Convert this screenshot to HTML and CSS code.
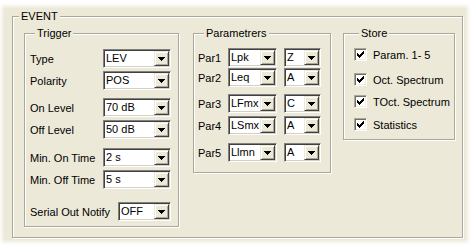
FILE: index.html
```html
<!DOCTYPE html>
<html>
<head>
<meta charset="utf-8">
<link rel="stylesheet" href="styles.css">
</head>
<body>
<div class="dialog">
  <div class="gb event">
    <div class="gb-title t-event">EVENT</div>
    <div class="cols">
      <div class="gb trigger">
        <div class="gb-title t-trigger">Trigger</div>
        <div class="trow r-type"><span class="lbl">Type</span><div class="combo w68"><span class="val">LEV</span><span class="btn"><svg width="7" height="4" viewBox="0 0 7 4"><path d="M0 0h7v1H0zM1 1h5v1H1zM2 2h3v1H2zM3 3h1v1H3z"/></svg></span></div></div>
        <div class="trow r-pol"><span class="lbl">Polarity</span><div class="combo w68"><span class="val">POS</span><span class="btn"><svg width="7" height="4" viewBox="0 0 7 4"><path d="M0 0h7v1H0zM1 1h5v1H1zM2 2h3v1H2zM3 3h1v1H3z"/></svg></span></div></div>
        <div class="trow r-on"><span class="lbl">On Level</span><div class="combo w68"><span class="val">70 dB</span><span class="btn"><svg width="7" height="4" viewBox="0 0 7 4"><path d="M0 0h7v1H0zM1 1h5v1H1zM2 2h3v1H2zM3 3h1v1H3z"/></svg></span></div></div>
        <div class="trow r-off"><span class="lbl">Off Level</span><div class="combo w68"><span class="val">50 dB</span><span class="btn"><svg width="7" height="4" viewBox="0 0 7 4"><path d="M0 0h7v1H0zM1 1h5v1H1zM2 2h3v1H2zM3 3h1v1H3z"/></svg></span></div></div>
        <div class="trow r-minon"><span class="lbl">Min. On Time</span><div class="combo w68"><span class="val">2 s</span><span class="btn"><svg width="7" height="4" viewBox="0 0 7 4"><path d="M0 0h7v1H0zM1 1h5v1H1zM2 2h3v1H2zM3 3h1v1H3z"/></svg></span></div></div>
        <div class="trow r-minoff"><span class="lbl">Min. Off Time</span><div class="combo w68"><span class="val">5 s</span><span class="btn"><svg width="7" height="4" viewBox="0 0 7 4"><path d="M0 0h7v1H0zM1 1h5v1H1zM2 2h3v1H2zM3 3h1v1H3z"/></svg></span></div></div>
        <div class="trow r-serial"><span class="lbl">Serial Out Notify</span><div class="combo w53"><span class="val">OFF</span><span class="btn"><svg width="7" height="4" viewBox="0 0 7 4"><path d="M0 0h7v1H0zM1 1h5v1H1zM2 2h3v1H2zM3 3h1v1H3z"/></svg></span></div></div>
      </div>

      <div class="gb params">
        <div class="gb-title t-params">Parametrers</div>
        <div class="prow p1"><span class="plbl">Par1</span><div class="combo w49"><span class="val">Lpk</span><span class="btn"><svg width="7" height="4" viewBox="0 0 7 4"><path d="M0 0h7v1H0zM1 1h5v1H1zM2 2h3v1H2zM3 3h1v1H3z"/></svg></span></div><div class="combo w37"><span class="val">Z</span><span class="btn"><svg width="7" height="4" viewBox="0 0 7 4"><path d="M0 0h7v1H0zM1 1h5v1H1zM2 2h3v1H2zM3 3h1v1H3z"/></svg></span></div></div>
        <div class="prow p2"><span class="plbl">Par2</span><div class="combo w49"><span class="val">Leq</span><span class="btn"><svg width="7" height="4" viewBox="0 0 7 4"><path d="M0 0h7v1H0zM1 1h5v1H1zM2 2h3v1H2zM3 3h1v1H3z"/></svg></span></div><div class="combo w37"><span class="val">A</span><span class="btn"><svg width="7" height="4" viewBox="0 0 7 4"><path d="M0 0h7v1H0zM1 1h5v1H1zM2 2h3v1H2zM3 3h1v1H3z"/></svg></span></div></div>
        <div class="prow p3"><span class="plbl">Par3</span><div class="combo w49"><span class="val">LFmx</span><span class="btn"><svg width="7" height="4" viewBox="0 0 7 4"><path d="M0 0h7v1H0zM1 1h5v1H1zM2 2h3v1H2zM3 3h1v1H3z"/></svg></span></div><div class="combo w37"><span class="val">C</span><span class="btn"><svg width="7" height="4" viewBox="0 0 7 4"><path d="M0 0h7v1H0zM1 1h5v1H1zM2 2h3v1H2zM3 3h1v1H3z"/></svg></span></div></div>
        <div class="prow p4"><span class="plbl">Par4</span><div class="combo w49"><span class="val">LSmx</span><span class="btn"><svg width="7" height="4" viewBox="0 0 7 4"><path d="M0 0h7v1H0zM1 1h5v1H1zM2 2h3v1H2zM3 3h1v1H3z"/></svg></span></div><div class="combo w37"><span class="val">A</span><span class="btn"><svg width="7" height="4" viewBox="0 0 7 4"><path d="M0 0h7v1H0zM1 1h5v1H1zM2 2h3v1H2zM3 3h1v1H3z"/></svg></span></div></div>
        <div class="prow p5"><span class="plbl">Par5</span><div class="combo w49"><span class="val">Llmn</span><span class="btn"><svg width="7" height="4" viewBox="0 0 7 4"><path d="M0 0h7v1H0zM1 1h5v1H1zM2 2h3v1H2zM3 3h1v1H3z"/></svg></span></div><div class="combo w37"><span class="val">A</span><span class="btn"><svg width="7" height="4" viewBox="0 0 7 4"><path d="M0 0h7v1H0zM1 1h5v1H1zM2 2h3v1H2zM3 3h1v1H3z"/></svg></span></div></div>
      </div>

      <div class="gb store">
        <div class="gb-title t-store">Store</div>
        <div class="crow c1"><span class="cb"><svg width="7" height="7" viewBox="0 0 7 7"><path d="M6 0h1v1H6zM5 1h2v1H5zM0 2h1v1H0zM4 2h3v1H4zM0 3h2v1H0zM3 3h3v1H3zM0 4h5v1H0zM1 5h3v1H1zM2 6h1v1H2z"/></svg></span><span class="clbl">Param. 1- 5</span></div>
        <div class="crow c2"><span class="cb"><svg width="7" height="7" viewBox="0 0 7 7"><path d="M6 0h1v1H6zM5 1h2v1H5zM0 2h1v1H0zM4 2h3v1H4zM0 3h2v1H0zM3 3h3v1H3zM0 4h5v1H0zM1 5h3v1H1zM2 6h1v1H2z"/></svg></span><span class="clbl">Oct. Spectrum</span></div>
        <div class="crow c3"><span class="cb"><svg width="7" height="7" viewBox="0 0 7 7"><path d="M6 0h1v1H6zM5 1h2v1H5zM0 2h1v1H0zM4 2h3v1H4zM0 3h2v1H0zM3 3h3v1H3zM0 4h5v1H0zM1 5h3v1H1zM2 6h1v1H2z"/></svg></span><span class="clbl">TOct. Spectrum</span></div>
        <div class="crow c4"><span class="cb"><svg width="7" height="7" viewBox="0 0 7 7"><path d="M6 0h1v1H6zM5 1h2v1H5zM0 2h1v1H0zM4 2h3v1H4zM0 3h2v1H0zM3 3h3v1H3zM0 4h5v1H0zM1 5h3v1H1zM2 6h1v1H2z"/></svg></span><span class="clbl">Statistics</span></div>
      </div>
    </div>
  </div>
</div>
</body>
</html>
```

FILE: styles.css
```css
* { box-sizing: border-box; }
html, body { margin: 0; padding: 0; background: #fff; }
body {
  font-family: "Liberation Sans", Arial, sans-serif;
  font-size: 11px;
  color: #000;
  width: 476px;
  height: 249px;
  overflow: hidden;
}
.dialog {
  margin: 8px 0 0 4px;
  width: 462px;
  height: 232px;
  background: #ECE9D8;
  box-shadow: 0 0 4px 2px #ECE9D8;
  padding: 8px 0 0 8px;
}
.gb {
  border: 1px solid #ACA899;
  box-shadow: inset 1px 1px 0 #fff, 1px 1px 0 #fff;
}
.gb-title {
  height: 13px;
  line-height: 13px;
  margin-top: -7px;
  padding: 0 2px;
  background: #ECE9D8;
  width: max-content;
  white-space: nowrap;
}
.event { width: 451px; height: 222px; }
.t-event { margin-left: 6px; }
.cols {
  display: flex;
  align-items: flex-start;
  margin-top: 10px;
  padding-left: 11px;
}
.trigger { width: 155px; padding: 0 7px 5px 5px; }
.t-trigger { margin-left: 5px; margin-bottom: 9px; }
.params { width: 138px; margin-left: 14px; padding: 0 8px 10px 4px; }
.t-params { margin-left: 6px; margin-bottom: 8px; }
.store { width: 112px; margin-left: 12px; padding: 0 4px 8px 10px; }
.t-store { margin-left: 5px; margin-bottom: 8px; }

.trow {
  display: flex;
  justify-content: space-between;
  align-items: center;
  height: 19px;
}
.lbl { white-space: nowrap; }
.r-pol, .r-off, .r-minoff { margin-top: 3px; }
.r-on { margin-top: 8px; }
.r-minon { margin-top: 9px; }
.r-serial { margin-top: 13px; }

.prow {
  display: flex;
  align-items: center;
  height: 19px;
}
.plbl { width: 30px; }
.prow .w37 { margin-left: 7px; }
.p2 { margin-top: 1px; }
.p3 { margin-top: 7px; }
.p4 { margin-top: 3px; }
.p5 { margin-top: 8px; }

.combo {
  display: flex;
  height: 19px;
  background: #fff;
  border: 1px solid;
  border-color: #808080 #fff #fff #808080;
  box-shadow: inset 1px 1px 0 #404040, inset -1px -1px 0 #D4D0C8;
  padding: 1px;
}
.w68 { width: 68px; }
.w53 { width: 53px; }
.w49 { width: 49px; }
.w37 { width: 37px; }
.val {
  flex: 1;
  padding-left: 1px;
  line-height: 15px;
  overflow: hidden;
  white-space: nowrap;
}
.btn {
  width: 15px;
  height: 15px;
  background: #ECE9D8;
  border: 1px solid;
  border-color: #ECE9D8 #404040 #404040 #ECE9D8;
  box-shadow: inset 1px 1px 0 #fff, inset -1px -1px 0 #ACA899;
  display: flex;
  align-items: center;
  justify-content: center;
}
.btn svg { display: block; fill: #000; }

.crow {
  display: flex;
  align-items: center;
  height: 13px;
}
.c2 { margin-top: 12px; }
.c3 { margin-top: 9px; }
.c4 { margin-top: 10px; }
.cb {
  width: 13px;
  height: 13px;
  background: #fff;
  border: 1px solid;
  border-color: #ACA899 #fff #fff #ACA899;
  box-shadow: inset 1px 1px 0 #716F64, inset -1px -1px 0 #F1EFE2;
  display: flex;
  align-items: center;
  justify-content: center;
}
.cb svg { display: block; fill: #000; }
.clbl { margin-left: 6px; white-space: nowrap; }
```
